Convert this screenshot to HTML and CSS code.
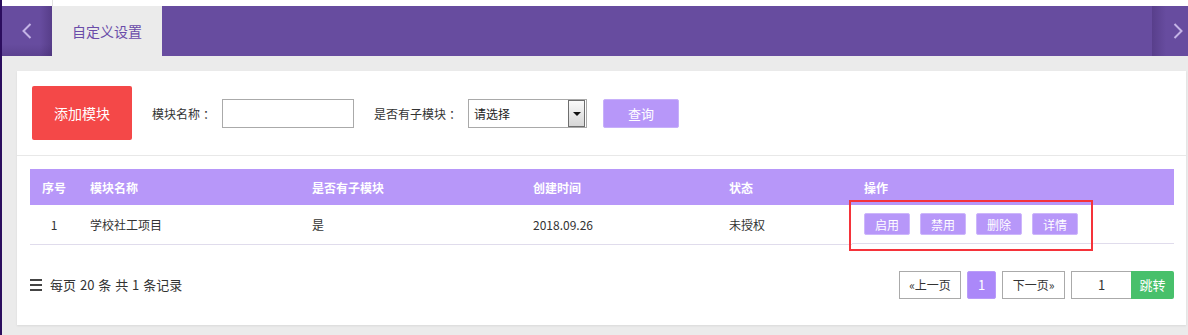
FILE: index.html
```html
<!DOCTYPE html>
<html lang="zh-CN">
<head>
  <meta charset="UTF-8" />
  <title>自定义设置</title>
  <link rel="stylesheet" href="styles.css">
</head>
<body>

  <div class="top-strip"><span class="top-line"></span></div>
  <div class="navbar">
    <a class="nav-arrow left">
      <svg width="10" height="16" viewBox="0 0 10 16"><polyline points="8.5,1 1.5,8 8.5,15" fill="none" stroke="#c4b4e6" stroke-width="2"/></svg>
    </a>
    <div class="tab active">自定义设置</div>
    <div class="nav-fill"></div>
    <a class="nav-arrow right">
      <svg width="10" height="16" viewBox="0 0 10 16"><polyline points="1.5,1 8.5,8 1.5,15" fill="none" stroke="#c4b4e6" stroke-width="2"/></svg>
    </a>
  </div>

  <div class="main">
    <div class="panel">
      <div class="toolbar">
        <button class="btn-add">添加模块</button>
        <label class="field-label name-label">模块名称<span class="colon">：</span></label>
        <input class="text-input" type="text">
        <label class="field-label sub-label">是否有子模块<span class="colon">：</span></label>
        <div class="fake-select">
          <span class="select-text">请选择</span>
          <span class="select-arrow"></span>
        </div>
        <button class="btn-query">查询</button>
      </div>

      <div class="table-wrap">
        <table class="grid">
          <thead>
            <tr>
              <th class="col-no">序号</th>
              <th class="col-name">模块名称</th>
              <th class="col-sub">是否有子模块</th>
              <th class="col-date">创建时间</th>
              <th class="col-state">状态</th>
              <th class="col-ops">操作</th>
            </tr>
          </thead>
          <tbody>
            <tr>
              <td class="col-no">1</td>
              <td>学校社工项目</td>
              <td>是</td>
              <td>2018.09.26</td>
              <td>未授权</td>
              <td class="ops">
                <button class="btn-op">启用</button>
                <button class="btn-op">禁用</button>
                <button class="btn-op">删除</button>
                <button class="btn-op">详情</button>
              </td>
            </tr>
          </tbody>
        </table>
        <div class="highlight-box"></div>
      </div>

      <div class="pager-bar">
        <div class="page-info">
          <svg width="12" height="12" viewBox="0 0 12 12"><rect x="0" y="0" width="12" height="2" fill="#444"/><rect x="0" y="5" width="12" height="2" fill="#444"/><rect x="0" y="10" width="12" height="2" fill="#444"/></svg>
          <span class="info-text">每页 20 条 共 1 条记录</span>
        </div>
        <div class="pager">
          <a class="page-btn prev">«上一页</a>
          <a class="page-btn current">1</a>
          <a class="page-btn next">下一页»</a>
          <input class="page-input" type="text" value="1">
          <button class="btn-jump">跳转</button>
        </div>
      </div>
    </div>
  </div>

</body>
</html>
```

FILE: styles.css
```css
body {
  margin: 0;
  background-color: #ebebeb;
  border-left: 2px solid #2b0d5e;
  font-family: "Noto Sans CJK SC", "Liberation Sans", sans-serif;
  font-size: 12px;
  color: #333;
  height: 335px;
  box-sizing: border-box;
  overflow: hidden;
}
.top-strip {
  height: 6px;
  background-color: #fff;
}
.top-line {
  display: block;
  margin-left: 50px;
  width: 1px;
  height: 6px;
  background-color: #e2e2e2;
}
.navbar {
  display: flex;
  height: 50px;
  background-color: #674c9f;
}
.nav-arrow {
  display: flex;
  align-items: center;
  justify-content: center;
}
.nav-arrow.left {
  width: 50px;
  background: linear-gradient(to left, rgba(30,10,60,0.22), rgba(30,10,60,0) 12px),
              linear-gradient(to top, rgba(30,10,60,0.15), rgba(30,10,60,0) 12px);
}
.nav-arrow.right {
  width: 36px;
  justify-content: flex-end;
  padding-right: 5px;
  box-sizing: border-box;
  background: linear-gradient(to right, rgba(30,10,60,0.2), rgba(30,10,60,0) 14px);
}
.tab {
  width: 110px;
  display: flex;
  align-items: center;
  justify-content: center;
  font-size: 14px;
  color: #6a4ca9;
}
.tab.active {
  background-color: #ebebeb;
}
.nav-fill {
  flex: 1;
}

.main {
  padding: 15px 2px 0 15px;
}
.panel {
  background-color: #fff;
  height: 254px;
  box-shadow: 0 1px 2px rgba(0,0,0,0.08);
}

.toolbar {
  display: flex;
  align-items: center;
  padding: 15px;
  border-bottom: 1px solid #e8e8e8;
}
.btn-add {
  width: 100px;
  height: 54px;
  background-color: #f44848;
  color: #fff;
  border: none;
  border-radius: 2px;
  font-family: inherit;
  font-size: 14px;
  margin-right: 20px;
}
.field-label {
  color: #333;
  font-size: 12px;
}
.colon {
  margin-left: 3px;
}
.name-label {
  width: 70px;
}
.sub-label {
  width: 94px;
}
.text-input {
  width: 132px;
  height: 29px;
  box-sizing: border-box;
  border: 1px solid #aaa;
  margin: 0 20px 0 0;
  padding: 0 6px;
}
.fake-select {
  width: 119px;
  height: 29px;
  box-sizing: border-box;
  border: 1px solid #a9a9a9;
  display: flex;
  align-items: center;
  justify-content: space-between;
  margin-right: 16px;
  padding-right: 1px;
}
.select-text {
  padding-left: 5px;
  font-size: 12px;
  color: #222;
}
.select-arrow {
  position: relative;
  width: 15px;
  height: 25px;
  border: 1px solid #6e6e6e;
  background: linear-gradient(#fafafa, #d6d6d6);
}
.select-arrow::after {
  content: "";
  position: absolute;
  left: 4px;
  top: 11px;
  border-left: 4px solid transparent;
  border-right: 4px solid transparent;
  border-top: 4px solid #111;
}
.btn-query {
  width: 76px;
  height: 29px;
  background-color: #b797f9;
  border: 1px solid #c7b0fa;
  border-radius: 2px;
  color: #fff;
  font-family: inherit;
  font-size: 13px;
}

.table-wrap {
  position: relative;
  padding: 13px 12px 0 13px;
}
.grid {
  width: 100%;
  border-collapse: collapse;
  table-layout: fixed;
}
.grid th {
  height: 36px;
  background-color: #b797f9;
  color: #fff;
  font-weight: bold;
  text-align: left;
  padding: 0 0 0 12px;
}
.grid td {
  height: 38px;
  border-bottom: 1px solid #e0dcec;
  padding: 0 0 0 12px;
  color: #333;
}
.grid .col-no {
  width: 48px;
  text-align: center;
  padding: 0;
}
.grid .col-name { width: 210px; }
.grid .col-sub { width: 209px; }
.grid .col-date { width: 184px; }
.grid .col-state { width: 123px; }
.ops {
  display: flex;
  gap: 10px;
  align-items: center;
}
.btn-op {
  width: 46px;
  height: 22px;
  background-color: #b797f9;
  border: 1px solid #cdb6fb;
  border-radius: 2px;
  color: #fff;
  font-family: inherit;
  font-size: 12px;
  padding: 0;
}
.highlight-box {
  position: absolute;
  left: 832px;
  top: 44px;
  width: 244px;
  height: 51px;
  box-sizing: border-box;
  border: 2px solid #f5333a;
}

.pager-bar {
  display: flex;
  justify-content: space-between;
  align-items: center;
  margin-top: 26px;
  padding: 0 12px 0 13px;
}
.page-info {
  display: flex;
  align-items: center;
  gap: 8px;
  font-size: 13px;
  color: #333;
}
.info-text {
  word-spacing: 1px;
}
.pager {
  display: flex;
  align-items: center;
}
.page-btn {
  height: 28px;
  box-sizing: border-box;
  border: 1px solid #aaa;
  display: flex;
  align-items: center;
  justify-content: center;
  font-size: 12px;
  color: #333;
  margin-right: 6px;
}
.page-btn.prev { width: 62px; }
.page-btn.next { width: 63px; }
.page-btn.current {
  width: 29px;
  background-color: #ab88f9;
  border-color: #b99cf9;
  border-radius: 2px;
  color: #fff;
  font-size: 13px;
}
.page-input {
  width: 60px;
  height: 28px;
  box-sizing: border-box;
  border: 1px solid #aaa;
  border-right: none;
  margin: 0;
  text-align: center;
  font-family: inherit;
  font-size: 13px;
  color: #333;
}
.btn-jump {
  width: 43px;
  height: 28px;
  background-color: #48c06b;
  border: none;
  border-radius: 0 2px 2px 0;
  color: #fff;
  font-family: inherit;
  font-size: 13px;
  padding: 0;
}
```
